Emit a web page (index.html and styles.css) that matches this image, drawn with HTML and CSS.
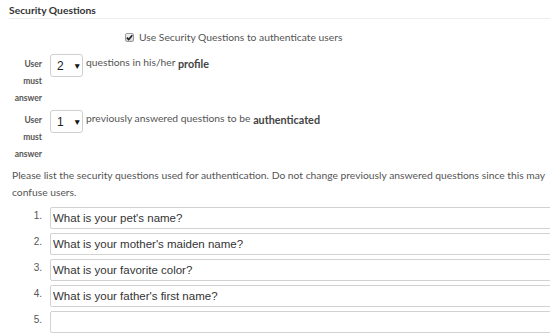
FILE: index.html
```html
<!DOCTYPE html>
<html>
<head>
<meta charset="utf-8">
<link rel="stylesheet" href="styles.css">
</head>
<body>
<div class="panel">
  <div class="heading">Security Questions</div>
  <div class="check-row">
    <span class="checkbox"><svg viewBox="0 0 9 9" width="9" height="9"><path d="M1.8 4.6 L3.7 6.6 L7.3 2.2" fill="none" stroke="#222" stroke-width="1.6"/></svg></span>
    <span class="check-text">Use Security Questions to authenticate users</span>
  </div>
  <div class="group">
    <div class="glabel">User must answer</div>
    <div class="select"><span class="sval">2</span><span class="arrow">&#9660;</span></div>
    <div class="gtext">questions in his/her <b class="kw">profile</b></div>
  </div>
  <div class="group">
    <div class="glabel">User must answer</div>
    <div class="select"><span class="sval">1</span><span class="arrow">&#9660;</span></div>
    <div class="gtext">previously answered questions to be <b class="kw">authenticated</b></div>
  </div>
  <p class="note">Please list the security questions used for authentication. Do not change previously answered questions since this may confuse users.</p>
  <ol class="qlist">
    <li class="qrow"><span class="qnum">1.</span><input class="qinput" type="text" value="What is your pet's name?"></li>
    <li class="qrow"><span class="qnum">2.</span><input class="qinput" type="text" value="What is your mother's maiden name?"></li>
    <li class="qrow"><span class="qnum">3.</span><input class="qinput" type="text" value="What is your favorite color?"></li>
    <li class="qrow"><span class="qnum">4.</span><input class="qinput" type="text" value="What is your father's first name?"></li>
    <li class="qrow"><span class="qnum">5.</span><input class="qinput" type="text" value=""></li>
  </ol>
</div>
</body>
</html>
```
FILE: styles.css
```css
html, body {
  margin: 0;
  padding: 0;
  overflow: hidden;
  background: #fff;
}
body {
  font-family: Lato, "Open Sans", sans-serif;
  color: #555;
  font-size: 10.3px;
}
.panel {
  padding: 3px 0 0 9px;
}
.heading {
  font-weight: 700;
  font-size: 10.3px;
  line-height: 14px;
  color: #333;
  padding-bottom: 1px;
  border-bottom: 1px solid #ececec;
}
.check-row {
  display: flex;
  align-items: center;
  padding: 10px 0 0 116px;
  height: 17px;
  line-height: 17px;
}
.checkbox {
  width: 9px;
  height: 9px;
  box-sizing: border-box;
  border: 1px solid #9a9a9a;
  border-radius: 2px;
  background: linear-gradient(#f4f4f4, #d6d6d6);
  display: flex;
  align-items: center;
  justify-content: center;
  margin-right: 5px;
}
.checkbox svg {
  display: block;
  width: 9px;
  height: 9px;
  flex: none;
}
.check-text {
  color: #555;
}
.group {
  display: flex;
  align-items: flex-start;
  margin-bottom: 3.5px;
}
.check-row + .group {
  margin-top: 8px;
}
.glabel {
  width: 33px;
  text-align: right;
  font-size: 8.5px;
  font-weight: 700;
  line-height: 17px;
  color: #555;
  padding-top: 1.5px;
  flex: none;
}
.select {
  margin-left: 8px;
  width: 33px;
  height: 23px;
  box-sizing: border-box;
  border: 1px solid #cfcfcf;
  border-radius: 3px;
  background: #fff;
  display: flex;
  align-items: center;
  padding-left: 6px;
  font-family: "Liberation Sans", Arial, sans-serif;
  color: #222;
  flex: none;
}
.sval {
  font-size: 12px;
  width: 16px;
}
.arrow {
  font-size: 8.5px;
  color: #111;
}
.gtext {
  margin-left: 3px;
  line-height: 17px;
  color: #555;
}
.kw {
  font-weight: 700;
  font-size: 10.8px;
  color: #444;
  vertical-align: -2px;
}
.note {
  margin: 4px 0 0 0;
  padding-left: 3px;
  line-height: 17.5px;
  font-size: 10.3px;
  color: #555;
  width: 545px;
}
.qlist {
  list-style: none;
  margin: 5.5px 0 0 0;
  padding: 0;
}
.qrow {
  display: flex;
  align-items: flex-start;
  margin-bottom: 4px;
}
.qnum {
  width: 33px;
  text-align: right;
  font-family: "Liberation Sans", Arial, sans-serif;
  font-size: 10px;
  line-height: 12px;
  padding-top: 3px;
  color: #555;
  flex: none;
}
.qinput {
  margin: 0 0 0 8px;
  width: 520px;
  height: 22px;
  box-sizing: border-box;
  border: 1px solid #d2d2d2;
  border-radius: 2px;
  padding: 0 2px;
  font-family: "Liberation Sans", Arial, sans-serif;
  font-size: 11.5px;
  color: #333;
  background: #fff;
  flex: none;
  outline: none;
}
```
